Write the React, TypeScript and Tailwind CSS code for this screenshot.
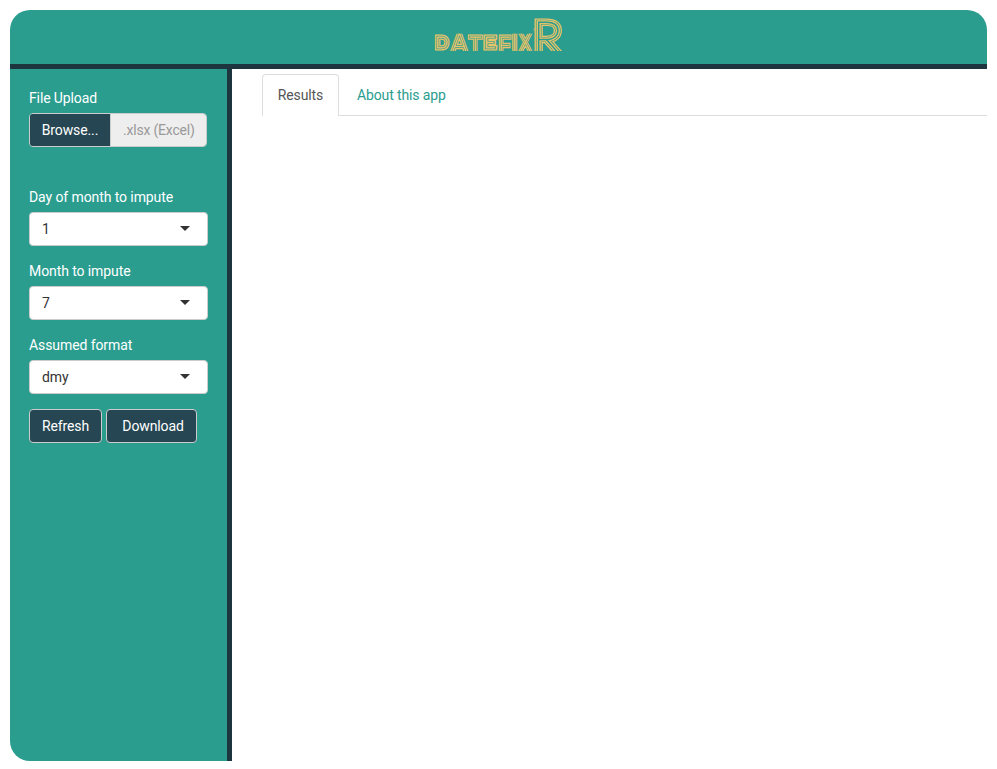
import React from "react";

const glyphs = [
  { ch: "D", cx: 441.6, y: 48.4, size: 16.7, sx: 0.98, big: false },
  { ch: "A", cx: 459, y: 53.5, size: 29, sx: 0.88, big: false },
  { ch: "T", cx: 475, y: 54, size: 24.6, sx: 0.8, big: false },
  { ch: "E", cx: 489.6, y: 48.4, size: 16.7, sx: 1.15, big: false },
  { ch: "F", cx: 504.2, y: 54, size: 24.6, sx: 0.82, big: false },
  { ch: "I", cx: 514.5, y: 54, size: 32, sx: 0.9, big: false },
  { ch: "X", cx: 525.2, y: 54, size: 32, sx: 0.72, big: false },
  { ch: "R", cx: 547.4, y: 55.6, size: 48, sx: 1.06, big: true },
];

const smallRings = [
  { color: "#e9c46a", width: 5.2 },
  { color: "#2a9d8f", width: 2.5 },
  { color: "#e9c46a", width: 1.2 },
];
const bigRings = [
  { color: "#e9c46a", width: 7.2 },
  { color: "#2a9d8f", width: 4.7 },
  { color: "#e9c46a", width: 3.4 },
  { color: "#2a9d8f", width: 0.8 },
];

function Logo() {
  return (
    <svg
      width="136"
      height="44"
      viewBox="431 12 136 44"
      className="font-['Lato',sans-serif] font-thin opacity-[0.99]"
      role="img"
      aria-label="DATEFIXR"
    >
      <clipPath id="wordmark-band">
        <rect x="431" y="33.8" width="102" height="17.2" />
        <rect x="533.8" y="17.8" width="29" height="33.2" />
      </clipPath>
      <g clipPath="url(#wordmark-band)" textAnchor="middle">
        {glyphs.map((g) =>
          (g.big ? bigRings : smallRings).map((r) => (
            <text
              key={g.ch + r.width}
              transform={`translate(${g.cx} ${g.y}) scale(${g.sx} 1)`}
              fontSize={g.size}
              fill={r.color}
              stroke={r.color}
              strokeWidth={r.width}
            >
              {g.ch}
            </text>
          )),
        )}
      </g>
    </svg>
  );
}

function SelectField({ label, value }: { label: string; value: string }) {
  return (
    <div className="mb-[15px]">
      <label className="mb-[5px] block leading-5 tracking-[-0.09px] text-white">{label}</label>
      <button className="flex h-[34px] w-[179px] items-center justify-between rounded border border-[#cccccc] bg-white pr-[17px] pl-3 text-[#333333]">
        <span>{value}</span>
        <span className="mb-0.5 h-0 w-0 border-x-[5px] border-t-[5px] border-x-transparent border-t-[#333333]" />
      </button>
    </div>
  );
}

export default function App() {
  return (
    <div className="h-[769px] bg-white px-[10px] pt-[10px] font-['Roboto',sans-serif] text-[14px] leading-5 tracking-[-0.12px]">
      <header className="flex h-[59px] justify-center rounded-t-[20px] border-b-[5px] border-[#1d353f] bg-[#2a9d8f]">
        <div className="mt-0.5">
          <Logo />
        </div>
      </header>
      <div className="flex h-[692px]">
        <aside className="w-[222px] rounded-bl-[20px] border-r-[5px] border-[#1d353f] bg-[#2a9d8f] pt-[19px] pl-[19px]">
          <label className="mb-[5px] block text-white">File Upload</label>
          <div className="mb-10 flex h-[34px] w-[178px] overflow-hidden rounded border border-[#cccccc]">
            <button className="w-[80px] bg-[#264653] text-white">Browse...</button>
            <span className="flex flex-1 items-center border-l border-[#cccccc] bg-[#eeeeee] pl-3 tracking-[-0.2px] text-[#999999]">.xlsx (Excel)</span>
          </div>
          <SelectField label="Day of month to impute" value="1" />
          <SelectField label="Month to impute" value="7" />
          <SelectField label="Assumed format" value="dmy" />
          <div className="flex gap-1 text-white">
            <button className="h-[34px] w-[73px] rounded border border-[#cccccc] bg-[#264653]">Refresh</button>
            <button className="h-[34px] w-[91px] rounded border border-[#cccccc] bg-[#264653] pl-[3px]">Download</button>
          </div>
        </aside>
        <main className="flex-1 pt-[5px] pl-[30px]">
          <nav className="flex h-[42px] border-b border-[#dddddd]">
            <button className="h-[42px] w-[77px] rounded-t border border-b-0 border-[#dddddd] bg-white pb-0.5 text-[#555555]">Results</button>
            <button className="ml-[18px] text-[#2a9d8f]">About this app</button>
          </nav>
        </main>
      </div>
    </div>
  );
}
